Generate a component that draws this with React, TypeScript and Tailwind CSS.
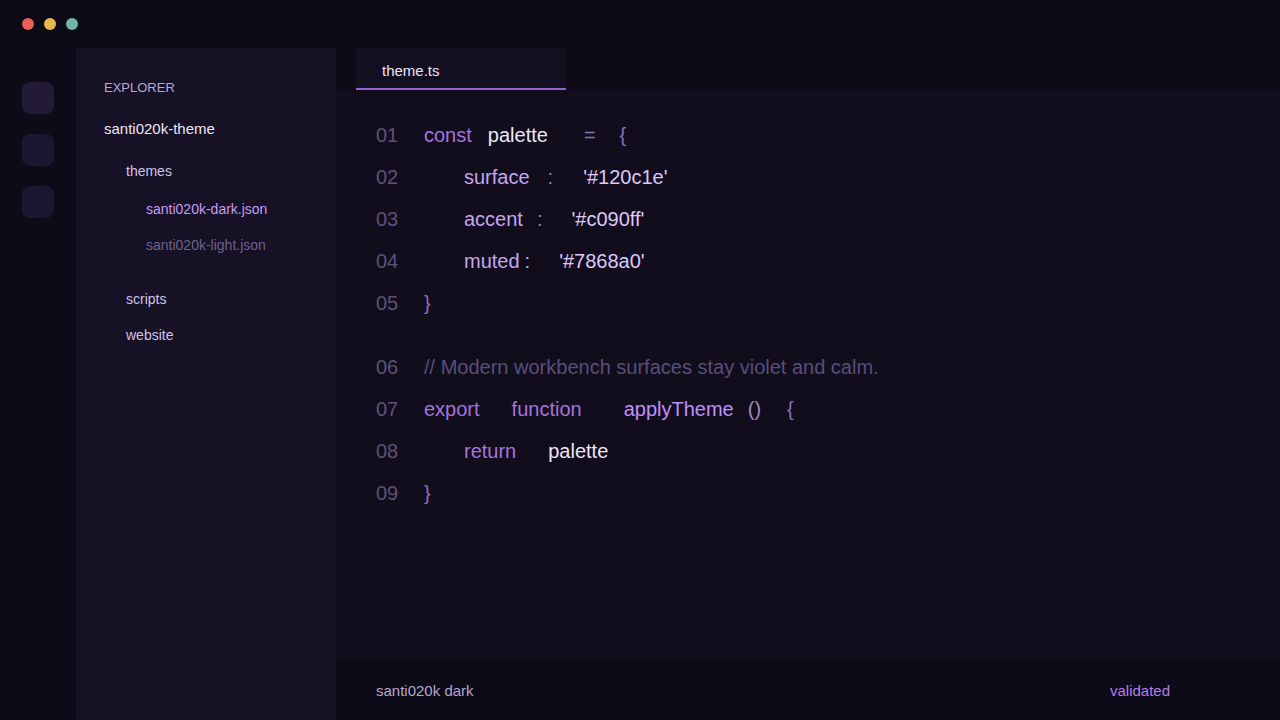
import React from 'react';

type Tok = { t: string; c: string; ml?: string };

const KW = 'text-[#a574dc]';
const ID = 'text-[#ece6f6]';
const OP = 'text-[#8c6fbe]';
const PROP = 'text-[#c7a5f0]';
const STR = 'text-[#dfc7fc]';
const COLON = 'text-[#9481b4]';
const CMT = 'text-[#5b4d7a]';
const FN = 'text-[#c090ff]';

const lines: { n: string; indent?: boolean; gapTop?: boolean; toks: Tok[] }[] = [
  {
    n: '01',
    toks: [
      { t: 'const', c: KW },
      { t: 'palette', c: ID, ml: 'ml-[16px]' },
      { t: '=', c: OP, ml: 'ml-[36px]' },
      { t: '{', c: OP, ml: 'ml-[24px]' },
    ],
  },
  {
    n: '02',
    indent: true,
    toks: [
      { t: 'surface', c: PROP },
      { t: ':', c: COLON, ml: 'ml-[18px]' },
      { t: "'#120c1e'", c: STR, ml: 'ml-[30px]' },
    ],
  },
  {
    n: '03',
    indent: true,
    toks: [
      { t: 'accent', c: PROP },
      { t: ':', c: COLON, ml: 'ml-[14px]' },
      { t: "'#c090ff'", c: STR, ml: 'ml-[29px]' },
    ],
  },
  {
    n: '04',
    indent: true,
    toks: [
      { t: 'muted', c: PROP },
      { t: ':', c: PROP, ml: 'ml-[5px]' },
      { t: "'#7868a0'", c: STR, ml: 'ml-[29px]' },
    ],
  },
  { n: '05', toks: [{ t: '}', c: OP }] },
  {
    n: '06',
    gapTop: true,
    toks: [{ t: '// Modern workbench surfaces stay violet and calm.', c: CMT }],
  },
  {
    n: '07',
    toks: [
      { t: 'export', c: KW },
      { t: 'function', c: KW, ml: 'ml-[32px]' },
      { t: 'applyTheme', c: FN, ml: 'ml-[42px]' },
      { t: '()', c: 'text-[#9d8cc0]', ml: 'ml-[14px]' },
      { t: '{', c: OP, ml: 'ml-[26px]' },
    ],
  },
  {
    n: '08',
    indent: true,
    toks: [
      { t: 'return', c: KW },
      { t: 'palette', c: ID, ml: 'ml-[32px]' },
    ],
  },
  { n: '09', toks: [{ t: '}', c: OP }] },
];

function ActivityBar() {
  return (
    <div className="w-[76px] shrink-0 bg-[#0e0b18] flex flex-col items-start pl-[22px] pt-[34px] gap-[20px]">
      <div className="w-[32px] h-[32px] rounded-[8px] bg-[#221a37]" />
      <div className="w-[32px] h-[32px] rounded-[8px] bg-[#1c1630]" />
      <div className="w-[32px] h-[32px] rounded-[8px] bg-[#1c1630]" />
    </div>
  );
}

function Sidebar() {
  return (
    <div className="w-[260px] shrink-0 bg-[#171126] pl-[28px] pt-[30px] leading-[20px]">
      <div className="text-[13px] text-[#b7a8d6]">EXPLORER</div>
      <div className="mt-[21px] text-[15px] text-[#ebe4f6]">santi020k-theme</div>
      <div className="mt-[22px] pl-[22px] text-[14px] text-[#cfc4e6]">themes</div>
      <div className="mt-[18px] pl-[42px] text-[14px] text-[#c69cf2]">santi020k-dark.json</div>
      <div className="mt-[16px] pl-[42px] text-[14px] text-[#6f6091]">santi020k-light.json</div>
      <div className="mt-[34px] pl-[22px] text-[14px] text-[#cfc4e6]">scripts</div>
      <div className="mt-[16px] pl-[22px] text-[14px] text-[#cfc4e6]">website</div>
    </div>
  );
}

function Editor() {
  return (
    <div className="flex-1 flex flex-col bg-[#110d1d]">
      <div className="h-[42px] bg-[#0e0b17] pl-[20px] flex shrink-0">
        <div className="w-[210px] h-full bg-[#130f21] border-b-2 border-[#9a5fd2] pl-[26px] pt-[6px] flex items-center text-[15px] text-[#ebe4f6]">
          theme.ts
        </div>
      </div>
      <div className="flex-1 pt-[24px] pl-[40px] text-[20px]">
        {lines.map((l) => (
          <div key={l.n} className={`flex items-center h-[42px] leading-[42px] ${l.gapTop ? 'mt-[22px]' : ''}`}>
            <span className="w-[48px] shrink-0 text-[#5e5179]">{l.n}</span>
            <span className={`flex whitespace-pre ${l.indent ? 'pl-[40px]' : ''}`}>
              {l.toks.map((tk, i) => (
                <span key={i} className={`${tk.c} ${tk.ml ?? ''}`}>
                  {tk.t}
                </span>
              ))}
            </span>
          </div>
        ))}
      </div>
      <div className="h-[60px] shrink-0 bg-[#0d0a17] flex items-center justify-between pl-[40px] pr-[110px] pt-[3px] text-[15px]">
        <span className="text-[#b3a6d1]">santi020k dark</span>
        <span className="text-[#b67ce9]">validated</span>
      </div>
    </div>
  );
}

export default function App() {
  return (
    <div
      className="w-[1280px] h-[720px] flex flex-col bg-[#0d0a17] overflow-hidden"
      style={{ fontFamily: '"Liberation Sans", Arial, sans-serif' }}
    >
      <div className="h-[48px] shrink-0 flex items-center pl-[22px] gap-[10px]">
        <span className="w-[12px] h-[12px] rounded-full bg-[#ec5f59]" />
        <span className="w-[12px] h-[12px] rounded-full bg-[#e9b94b]" />
        <span className="w-[12px] h-[12px] rounded-full bg-[#6fb6a6]" />
      </div>
      <div className="flex-1 flex min-h-0">
        <ActivityBar />
        <Sidebar />
        <Editor />
      </div>
    </div>
  );
}
